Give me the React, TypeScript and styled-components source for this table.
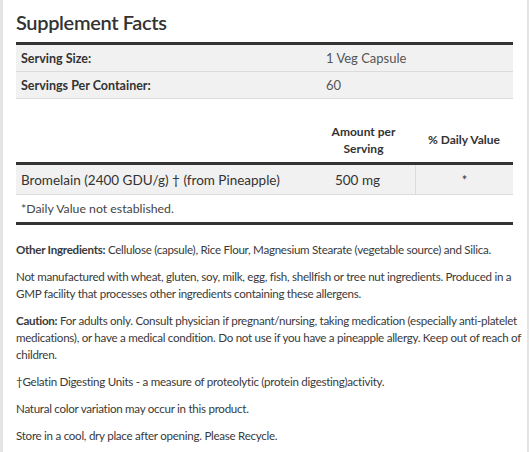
import React from "react";
import styled, { createGlobalStyle } from "styled-components";

const Global = createGlobalStyle`
  html, body { margin: 0; padding: 0; background: #fff; }
  body { font-family: Lato, "Noto Sans", sans-serif; color: #333; }
  *, *::before, *::after { box-sizing: border-box; }
`;

const Page = styled.div`
  width: 529px;
  height: 452px;
  border-left: 3px solid #e4e4e4;
  border-right: 2px solid #e4e4e4;
  padding-left: 13px;
  overflow: hidden;
`;

const Facts = styled.div`
  width: 497px;
`;

const Title = styled.h2`
  margin: 0;
  height: 42px;
  display: flex;
  align-items: center;
  padding-top: 2px;
  font-size: 20px;
  font-weight: 600;
  letter-spacing: -0.35px;
  color: #333;
`;

const Thick = styled.div`
  height: 3px;
  background: #333;
`;

const InfoRow = styled.div`
  display: grid;
  grid-template-columns: 310px 1fr;
  align-items: center;
  height: 27px;
  background: #f1f1f1;
  border-bottom: 1px solid #dcdcdc;
  font-size: 12.5px;
`;

const InfoLabel = styled.div`
  padding-left: 5px;
  font-weight: 700;
  color: #333;
`;

const InfoValue = styled.div`
  color: #555;
  font-size: 13px;
`;

const Cols = styled.div<{ $h: number; $shade?: boolean; $line?: boolean }>`
  display: grid;
  grid-template-columns: 296px 103px 1fr;
  height: ${(p) => p.$h}px;
  background: ${(p) => (p.$shade ? "#f1f1f1" : "transparent")};
  border-bottom: ${(p) => (p.$line ? "1px solid #dcdcdc" : "none")};
`;

const HeadCell = styled.div<{ $pt: number }>`
  padding-top: ${(p) => p.$pt}px;
  text-align: center;
  font-size: 12px;
  font-weight: 700;
  line-height: 17px;
  color: #333;
`;

const Cell = styled.div<{ $align?: string; $divider?: boolean; $size?: number; $pr?: number }>`
  display: flex;
  align-items: center;
  justify-content: ${(p) => p.$align || "flex-start"};
  padding-left: ${(p) => (p.$align ? 0 : 5)}px;
  padding-right: ${(p) => p.$pr || 0}px;
  font-size: ${(p) => p.$size || 13.5}px;
  border-left: ${(p) => (p.$divider ? "1px solid #dcdcdc" : "none")};
  color: #333;
`;

const Foot = styled.div`
  height: 27px;
  display: flex;
  align-items: center;
  padding-left: 5px;
  font-size: 12.3px;
  color: #444;
`;

const Notes = styled.div`
  padding-top: 16px;
  font-size: 11.6px;
  letter-spacing: -0.28px;
  line-height: 17px;
  color: #3a3a3a;
`;

const Para = styled.p`
  margin: 0 0 10px;
`;

const B = styled.b`
  font-weight: 700;
`;

export default function App() {
  return (
    <>
      <Global />
      <Page>
        <Facts>
          <Title>Supplement Facts</Title>
          <Thick />
          <InfoRow>
            <InfoLabel>Serving Size:</InfoLabel>
            <InfoValue>1 Veg Capsule</InfoValue>
          </InfoRow>
          <InfoRow>
            <InfoLabel>Servings Per Container:</InfoLabel>
            <InfoValue>60</InfoValue>
          </InfoRow>
          <Cols $h={63}>
            <div />
            <HeadCell $pt={24}>
              Amount per
              <br />
              Serving
            </HeadCell>
            <HeadCell $pt={32}>% Daily Value</HeadCell>
          </Cols>
          <Thick />
          <Cols $h={30} $shade $line>
            <Cell>Bromelain (2400 GDU/g) † (from Pineapple)</Cell>
            <Cell $align="center" $pr={12}>500 mg</Cell>
            <Cell $align="center" $divider $size={13}>*</Cell>
          </Cols>
          <Foot>*Daily Value not established.</Foot>
          <Thick />
        </Facts>
        <Notes>
          <Para>
            <B>Other Ingredients:</B> Cellulose (capsule), Rice Flour, Magnesium Stearate
            (vegetable source) and Silica.
          </Para>
          <Para>
            Not manufactured with wheat, gluten, soy, milk, egg, fish, shellfish or tree nut
            ingredients. Produced in a GMP facility that processes other ingredients
            containing these allergens.
          </Para>
          <Para>
            <B>Caution:</B> For adults only. Consult physician if pregnant/nursing, taking
            medication (especially anti-platelet medications), or have a medical condition.
            Do not use if you have a pineapple allergy. Keep out of reach of children.
          </Para>
          <Para>†Gelatin Digesting Units - a measure of proteolytic (protein digesting)activity.</Para>
          <Para>Natural color variation may occur in this product.</Para>
          <Para>Store in a cool, dry place after opening. Please Recycle.</Para>
        </Notes>
      </Page>
    </>
  );
}
